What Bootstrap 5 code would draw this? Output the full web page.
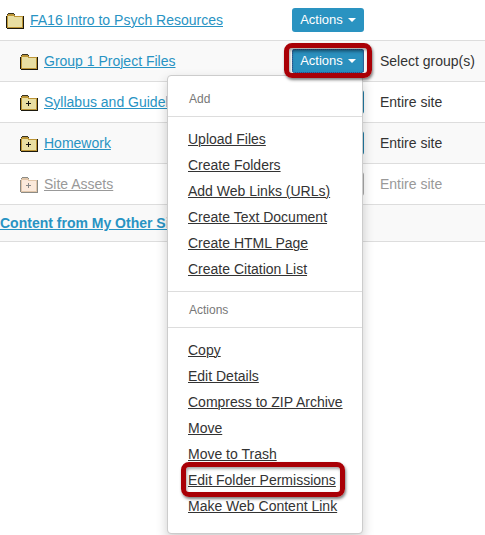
<!DOCTYPE html>
<html lang="en">
<head>
<meta charset="utf-8">
<meta name="viewport" content="width=device-width, initial-scale=1">
<title>Resources</title>
<link href="https://cdn.jsdelivr.net/npm/bootstrap@5.3.0/dist/css/bootstrap.min.css" rel="stylesheet">
<style>
body { font-family: "Liberation Sans", Arial, sans-serif; font-size: 14px; line-height: 20px; color: #333; }
.files { table-layout: fixed; border-collapse: separate; border-spacing: 0; }
.files td { height: 41px; padding: 0; border-bottom: 1px solid #ddd; white-space: nowrap; color: #333; }
.files tr.shaded td { background: #f9f9f9; }
.files tr.other-sites td { height: 37px; }
.col-actions { width: 88px; }
.col-access { width: 105px; }
.files a { color: #2893c3; text-decoration-thickness: 1px; }
.files tr.inactive td, .files tr.inactive a { color: #999; }
.entry { gap: 6px; padding-left: 6px; }
.entry.child { padding-left: 20px; }
.folder { width: 18px; height: 16px; flex: none; margin-top: 2px; }
.inactive .folder { opacity: .5; }
.btn-actions { width: 72px; height: 24px; padding: 0; font-size: 13px; line-height: 24px; border: 0; border-radius: 3px; color: #fff; background: #2a93c1; display: flex; align-items: center; justify-content: center; }
.btn-actions:hover { color: #fff; background: #217ba3; }
.btn-actions::after { margin-left: 5px; border-top-width: 4px; border-left-width: 4px; border-right-width: 4px; vertical-align: middle; }
.btn-actions.pressed { background: #2a90be; box-shadow: inset 0 3px 3px #1f6a90; outline: 1px dotted #324080; outline-offset: -1px; }
.shaded .btn-actions:not(.pressed), .behind .btn-actions { background: #217ba3; }
.inactive .btn-actions { background: #aaa; }
.files .actions-menu { top: 26px; right: 1px; width: 196px; padding: 5px 0; font-size: 14px; border: 1px solid #ccc; border-radius: 4px; box-shadow: 0 5px 12px rgba(0,0,0,.2); z-index: 10; }
.actions-menu .dropdown-header { height: 35px; padding: 0 21px; font-size: 12px; line-height: 36px; color: #777; }
.actions-menu .dropdown-divider { margin: 0; border-color: #ddd; opacity: 1; }
.actions-menu .group { padding: 9px 20px; }
.actions-menu .group li { height: 26px; line-height: 26px; }
.actions-menu .group a { color: #333; }
.callout-frame::after { content: ""; position: absolute; inset: -6px -8px -5px; border: 5px solid #a90006; border-radius: 8px; box-shadow: 1px 2px 3px rgba(0,0,0,.5), inset 1px 2px 3px rgba(0,0,0,.35); pointer-events: none; z-index: 20; }
.link-frame::after { inset: -5px -9px -4px -7px; }
</style>
</head>
<body class="min-vh-100">
<svg class="d-none" aria-hidden="true">
  <symbol id="folder" viewBox="0 0 18 16" shape-rendering="crispEdges">
    <path d="M0 3h1v12h16V3h1v13H1v-1H0z" fill="#1c190d"/>
    <path d="M2 0h6v1H2zM1 1h1v1H1zM8 1h1v1H8z" fill="#393422"/>
    <path d="M2 1h6v1h1v1h8v12H1V2h1z" fill="#bc9536"/>
    <path d="M2 3h6v1h8v10H2z" fill="#e8dea2"/>
  </symbol>
  <symbol id="folder-plus" viewBox="0 0 18 16" shape-rendering="crispEdges">
    <use href="#folder"/>
    <path d="M8 6h1v2h2v1H9v2H8V9H6V8h2z" fill="#111"/>
  </symbol>
  <symbol id="folder-pale" viewBox="0 0 18 16" shape-rendering="crispEdges">
    <path d="M0 3h1v12h16V3h1v13H1v-1H0zM2 0h6v1H2zM1 1h1v1H1zM8 1h1v1H8z" fill="#1c190d"/>
    <path d="M2 1h6v1h1v1h8v12H1V2h1z" fill="#c58f58"/>
    <path d="M2 3h6v1h8v10H2z" fill="#f8d5b8"/>
    <path d="M8 6h1v2h2v1H9v2H8V9H6V8h2z" fill="#111"/>
  </symbol>
</svg>
<main class="min-vh-100">
<table class="files table mb-0 align-middle">
  <colgroup><col><col class="col-actions"><col class="col-access"></colgroup>
  <tbody>
  <tr>
    <td><div class="entry d-flex align-items-center"><svg class="folder" aria-hidden="true"><use href="#folder"/></svg><a href="#">FA16 Intro to Psych Resources</a></div></td>
    <td><button type="button" class="btn btn-actions dropdown-toggle">Actions</button></td>
    <td></td>
  </tr>
  <tr class="shaded">
    <td><div class="entry child d-flex align-items-center"><svg class="folder" aria-hidden="true"><use href="#folder"/></svg><a href="#">Group 1 Project Files</a></div></td>
    <td>
      <div class="dropdown d-inline-block align-middle">
        <div class="callout-frame position-relative">
          <button type="button" class="btn btn-actions pressed dropdown-toggle" aria-expanded="true" aria-controls="actions-menu">Actions</button>
        </div>
        <ul class="dropdown-menu actions-menu show" id="actions-menu">
          <li class="dropdown-header">Add</li>
          <li><hr class="dropdown-divider"></li>
          <li><ul class="group list-unstyled">
            <li><a href="#">Upload Files</a></li>
            <li><a href="#">Create Folders</a></li>
            <li><a href="#">Add Web Links (URLs)</a></li>
            <li><a href="#">Create Text Document</a></li>
            <li><a href="#">Create HTML Page</a></li>
            <li><a href="#">Create Citation List</a></li>
          </ul></li>
          <li><hr class="dropdown-divider"></li>
          <li class="dropdown-header">Actions</li>
          <li><hr class="dropdown-divider"></li>
          <li><ul class="group list-unstyled">
            <li><a href="#">Copy</a></li>
            <li><a href="#">Edit Details</a></li>
            <li><a href="#">Compress to ZIP Archive</a></li>
            <li><a href="#">Move</a></li>
            <li><a href="#">Move to Trash</a></li>
            <li><span class="callout-frame link-frame position-relative d-inline-block"><a href="#">Edit Folder Permissions</a></span></li>
            <li><a href="#">Make Web Content Link</a></li>
          </ul></li>
        </ul>
      </div>
    </td>
    <td>Select group(s)</td>
  </tr>
  <tr class="behind">
    <td><div class="entry child d-flex align-items-center"><svg class="folder" aria-hidden="true"><use href="#folder-plus"/></svg><a href="#">Syllabus and Guidelines</a></div></td>
    <td><button type="button" class="btn btn-actions dropdown-toggle">Actions</button></td>
    <td>Entire site</td>
  </tr>
  <tr class="shaded">
    <td><div class="entry child d-flex align-items-center"><svg class="folder" aria-hidden="true"><use href="#folder-plus"/></svg><a href="#">Homework</a></div></td>
    <td><button type="button" class="btn btn-actions dropdown-toggle">Actions</button></td>
    <td>Entire site</td>
  </tr>
  <tr class="inactive">
    <td><div class="entry child d-flex align-items-center"><svg class="folder" aria-hidden="true"><use href="#folder-pale"/></svg><a href="#">Site Assets</a></div></td>
    <td><button type="button" class="btn btn-actions dropdown-toggle">Actions</button></td>
    <td>Entire site</td>
  </tr>
  <tr class="shaded other-sites">
    <td colspan="3"><a href="#" class="fw-bold">Content from My Other Sites</a></td>
  </tr>
  </tbody>
</table>
</main>
<script src="https://cdn.jsdelivr.net/npm/bootstrap@5.3.0/dist/js/bootstrap.bundle.min.js"></script>
</body>
</html>
